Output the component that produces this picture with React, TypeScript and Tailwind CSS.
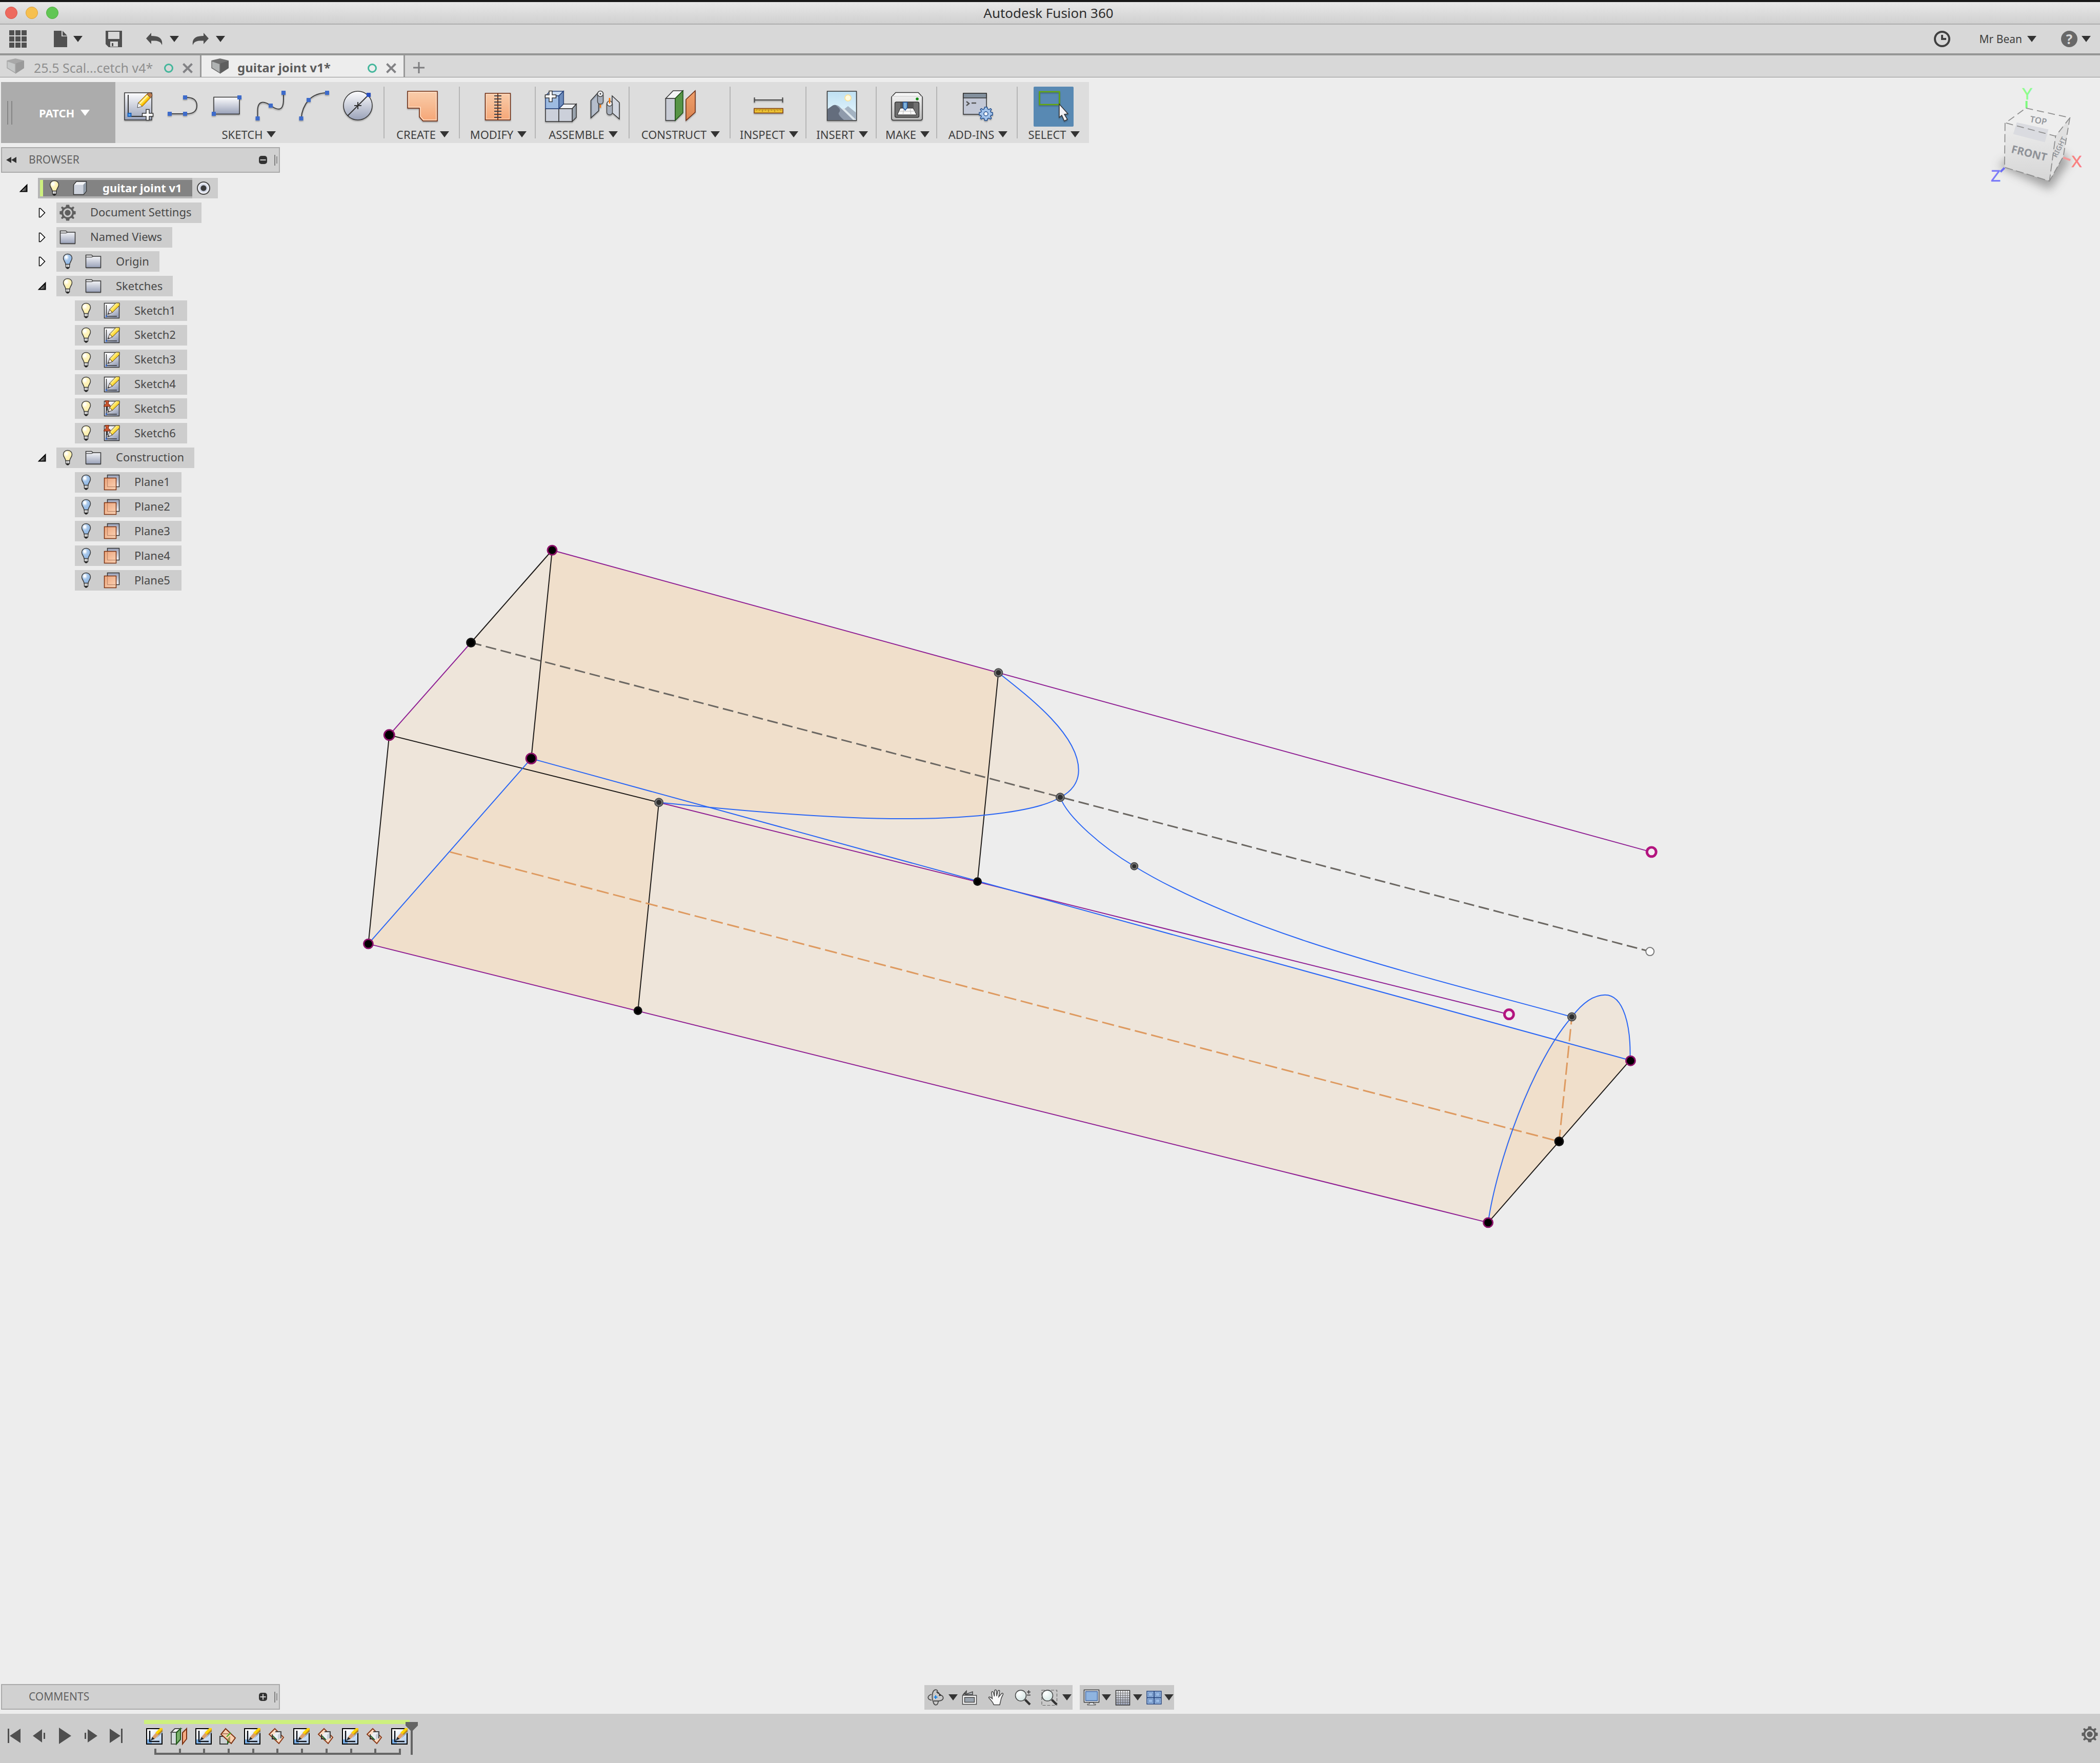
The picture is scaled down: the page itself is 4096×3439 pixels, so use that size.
import React from "react";

type Kids = { children?: React.ReactNode };

const Caret = ({ className = "text-[#333333]" }: { className?: string }) => (
  <svg viewBox="0 0 18 12" className={`h-3 w-[18px] shrink-0 ${className}`} aria-hidden="true">
    <path d="M0 0H18L9 12Z" fill="currentColor" />
  </svg>
);

const Defs = () => (
  <svg className="absolute size-0" aria-hidden="true">
    <defs>
      <linearGradient id="steel" x1="0" y1="0" x2="0" y2="1">
        <stop offset="0" stopColor="#fdfdfe" />
        <stop offset="1" stopColor="#99a1b8" />
      </linearGradient>
      <linearGradient id="paper" x1="0" y1="0" x2="0.6" y2="1">
        <stop offset="0.2" stopColor="#fdfdfe" />
        <stop offset="1" stopColor="#99a1b8" />
      </linearGradient>
      <linearGradient id="steelUp" x1="0" y1="1" x2="0" y2="0">
        <stop offset="0" stopColor="#f6f7fa" />
        <stop offset="1" stopColor="#99a1b8" />
      </linearGradient>
      <linearGradient id="peach" x1="0" y1="0" x2="0" y2="1">
        <stop offset="0" stopColor="#f9cdab" />
        <stop offset="1" stopColor="#f5a676" />
      </linearGradient>
      <linearGradient id="peachSoft" x1="0" y1="0" x2="1" y2="1">
        <stop offset="0" stopColor="#f3a172" />
        <stop offset="1" stopColor="#fad0b0" />
      </linearGradient>
      <linearGradient id="orange" x1="0" y1="0" x2="0" y2="1">
        <stop offset="0" stopColor="#f0a06b" />
        <stop offset="1" stopColor="#d98350" />
      </linearGradient>
      <linearGradient id="pencil" x1="0" y1="0" x2="1" y2="1">
        <stop offset="0.3" stopColor="#fff6b8" />
        <stop offset="0.5" stopColor="#ffe14a" />
        <stop offset="0.75" stopColor="#f7bd14" />
      </linearGradient>
      <linearGradient id="sky" x1="0" y1="0" x2="0" y2="1">
        <stop offset="0" stopColor="#bfe0f2" />
        <stop offset="1" stopColor="#eaf9ff" />
      </linearGradient>
      <linearGradient id="printer" x1="0" y1="0" x2="0" y2="1">
        <stop offset="0" stopColor="#fafafa" />
        <stop offset="1" stopColor="#b9b9b9" />
      </linearGradient>
      <linearGradient id="tlSketch" x1="0" y1="0" x2="1" y2="1">
        <stop offset="0.2" stopColor="#ffffff" />
        <stop offset="1" stopColor="#a9c6e8" />
      </linearGradient>
      <linearGradient id="blackTri" x1="0" y1="0" x2="1" y2="0">
        <stop offset="0" stopColor="#c0c0c0" />
        <stop offset="1" stopColor="#303030" />
      </linearGradient>
      <radialGradient id="bulbOn" cx="0.35" cy="0.3" r="0.7">
        <stop offset="0.1" stopColor="#ffffff" />
        <stop offset="0.45" stopColor="#fff3bd" />
        <stop offset="1" stopColor="#fff0a8" />
      </radialGradient>
      <radialGradient id="bulbOff" cx="0.35" cy="0.3" r="0.7">
        <stop offset="0.1" stopColor="#ffffff" />
        <stop offset="0.45" stopColor="#a5c6ea" />
        <stop offset="1" stopColor="#8fb6e4" />
      </radialGradient>
      <radialGradient id="lens" cx="0.35" cy="0.3" r="0.8">
        <stop offset="0" stopColor="#ffffff" />
        <stop offset="1" stopColor="#cfe2e0" />
      </radialGradient>
      <linearGradient id="cubeFront" x1="0" y1="0" x2="0" y2="1">
        <stop offset="0" stopColor="#ececec" />
        <stop offset="1" stopColor="#d6d6d6" />
      </linearGradient>
    </defs>
  </svg>
);

/* ---------- ribbon icons ---------- */

const Big = ({ children }: Kids) => (
  <svg viewBox="0 0 64 64" className="size-16 overflow-visible drop-shadow-[0_2px_1px_rgba(0,0,0,0.28)]" aria-hidden="true">
    {children}
  </svg>
);

const Handle = ({ x, y }: { x: number; y: number }) => (
  <rect x={x - 4} y={y - 4} width="8" height="8" fill="#3d6bcb" />
);

const Plus = ({ x, y }: { x: number; y: number }) => (
  <path
    transform={`translate(${x} ${y})`}
    d="M-3-10.500H3V-3H10.500V3H3V10.500H-3V3H-10.500V-3H-3Z"
    fill="#fff"
    stroke="#333"
    strokeWidth="1.500"
  />
);

const CreateSketchIcon = () => (
  <Big>
    <rect x="4" y="5" width="53" height="53" fill="url(#steel)" stroke="#333" strokeWidth="1.500" />
    <path d="M11 9V51H40" fill="none" stroke="#333" strokeWidth="2" />
    <rect x="10.500" y="45" width="6" height="6" fill="#4da0f5" stroke="#1d5fb5" strokeWidth="2" />
    <path d="M29 34L30.500 24.500L38.600 31.500Z" fill="#fff" stroke="#444" strokeWidth="1" />
    <path d="M31 24.500L47.400 7.700L54.600 14.700L38.600 31.500Z" fill="#f7b500" stroke="#8a5a00" strokeWidth="1" />
    <path d="M32 25.500L48.400 8.700L50.800 11L34.400 27.800Z" fill="#fff3a8" />
    <path d="M34.400 27.800L50.800 11L52.500 12.700L36.200 29.500Z" fill="#ffdd2e" />
    <path d="M47.400 7.700Q52 2.500 56.500 6.500Q60 10.500 54.600 14.700Z" fill="#b97a50" stroke="#5a3a20" strokeWidth="1" />
    <Plus x={49} y={48} />
  </Big>
);
const LineIcon = () => (
  <Big>
    <path d="M7 46H37Q60 47 60 30Q60 13 37 14" fill="none" stroke="#444" strokeWidth="2" />
    <Handle x={7} y={46} />
    <Handle x={37} y={46} />
    <Handle x={37} y={14} />
  </Big>
);
const RectIcon = () => (
  <Big>
    <rect x="7" y="13.500" width="50" height="33" fill="url(#steel)" stroke="#333" strokeWidth="1.500" />
    <Handle x={7} y={46} />
    <Handle x={57} y={14} />
  </Big>
);
const SplineIcon = () => (
  <Big>
    <path d="M7.500 55V40C7.500 18 22 22 33 30S58 44 58 18V5" fill="none" stroke="#444" strokeWidth="2" />
    <Handle x={7.5} y={55} />
    <Handle x={33} y={30} />
    <Handle x={58} y={5} />
  </Big>
);
const ArcIcon = () => (
  <Big>
    <path d="M7.500 55Q9 34 22 19Q36 5 58 5" fill="none" stroke="#444" strokeWidth="2" />
    <Handle x={7.5} y={55} />
    <Handle x={22} y={19} />
    <Handle x={58} y={5} />
  </Big>
);
const CircleIcon = () => (
  <Big>
    <circle cx="32" cy="30" r="28" fill="url(#steel)" stroke="#333" strokeWidth="1.500" />
    <path d="M12 50L53 9" stroke="#333" strokeWidth="2" />
    <path d="M25 30H39M32 23V37" stroke="#333" strokeWidth="2" />
    <rect x="49" y="5" width="8" height="8" fill="#2a4fc0" />
  </Big>
);
const PatchShapeIcon = () => (
  <Big>
    <path d="M3 2H61V60H33L26 52V35H3Z" fill="url(#peach)" stroke="#6b2a10" strokeWidth="1.500" />
    <path d="M5 33V4H59V58H34L28 51V33Z" fill="none" stroke="#fde0c8" strokeWidth="1.500" />
  </Big>
);
const StitchIcon = () => (
  <Big>
    <rect x="7.500" y="6" width="49" height="52" fill="url(#peach)" stroke="#6b2a10" strokeWidth="1.500" />
    <rect x="9.500" y="8" width="45" height="48" fill="none" stroke="#fde0c8" strokeWidth="1" />
    <path d="M32 6V58" stroke="#7a3010" strokeWidth="2" />
    {[11, 17, 23, 29, 35, 41, 47, 53].map((y) => (
      <path key={y} d={`M25 ${y}H39`} stroke="#3a3f4a" strokeWidth="2" />
    ))}
  </Big>
);
const NewComponentIcon = () => (
  <Big>
    <path d="M28 36L37 27H62L54 36Z" fill="#f2f3f5" stroke="#333" strokeWidth="1.500" />
    <path d="M54 36L62 27V53L54 61Z" fill="#9aa3ad" stroke="#333" strokeWidth="1.500" />
    <path d="M2 36H28V61H2Z" fill="#ccd0da" stroke="#333" strokeWidth="1.500" />
    <path d="M28 36H54V61H28Z" fill="#ccd0da" stroke="#333" strokeWidth="1.500" />
    <path d="M2 11L11 2H37L28 11Z" fill="#c9dbf1" stroke="#25407a" strokeWidth="1.500" />
    <path d="M28 11L37 2V27L28 36Z" fill="#6d8cbc" stroke="#25407a" strokeWidth="1.500" />
    <path d="M2 11H28V36H2Z" fill="#9dbbe2" stroke="#25407a" strokeWidth="1.500" />
    <Plus x={12} y={12} />
  </Big>
);
const JointIcon = () => (
  <Big>
    <path d="M4.500 20L20 3V40L4.500 54Z" fill="#99a4b3" stroke="#333" strokeWidth="1.500" />
    <path d="M7 21L18 10V40L7 50Z" fill="#b5bdca" />
    <rect x="17.500" y="5" width="11" height="22" rx="5" fill="#a8b0bd" stroke="#444" strokeWidth="1.500" />
    <circle cx="23" cy="7" r="5.500" fill="#eef0f3" stroke="#444" strokeWidth="1.500" />
    <circle cx="23" cy="7" r="1.500" fill="#333" />
    <path d="M23 28V34" stroke="#ff7700" strokeWidth="2.500" />
    <path d="M46 11L60 24V56L46 44Z" fill="#d3d7e0" stroke="#333" strokeWidth="1.500" />
    <rect x="35.500" y="22" width="11" height="26" rx="5" fill="#a8b0bd" stroke="#444" strokeWidth="1.500" />
    <circle cx="41" cy="26" r="5" fill="#eef0f3" stroke="#444" strokeWidth="1.500" />
    <path d="M41 15V26" stroke="#ff7700" strokeWidth="2.500" />
  </Big>
);
const OffsetPlaneIcon = () => (
  <Big>
    <path d="M3.500 16L18 1H37L22 16Z" fill="#f4f5f7" stroke="#333" strokeWidth="1.500" />
    <path d="M3.500 16H22V59H3.500Z" fill="#c9ccd6" stroke="#333" strokeWidth="1.500" />
    <path d="M22 16L37 1V44L22 59Z" fill="#579447" stroke="#1f5218" strokeWidth="1.500" />
    <path d="M43 18L61 1V43L43 59Z" fill="url(#orange)" stroke="#6b2a10" strokeWidth="1.500" />
  </Big>
);
const MeasureIcon = () => (
  <Big>
    <path d="M4 19H60M4.500 14V24M59.500 14V24" stroke="#444" strokeWidth="2" />
    <rect x="4" y="35.500" width="56" height="9" fill="#ecc133" stroke="#7a3a10" strokeWidth="1.500" />
    <path d="M8 37V40M11 37V39M14 37V40M17 37V39M20 37V42M23 37V39M26 37V40M29 37V39M32 37V42M35 37V39M38 37V40M41 37V39M44 37V42M47 37V39M50 37V40M53 37V39M56 37V40" stroke="#8a5a10" strokeWidth="1" />
  </Big>
);
const PictureIcon = () => (
  <Big>
    <rect x="3.500" y="2" width="57" height="57" fill="url(#sky)" stroke="#333" strokeWidth="1.500" />
    <circle cx="44" cy="15" r="6" fill="#fffbe0" stroke="#ffe08a" strokeWidth="1.500" />
    <path d="M30 42L44 31L60 44V58H40Z" fill="#a4b3c2" />
    <path d="M36 35L60 58H44L30 36Z" fill="#dde6ec" />
    <path d="M4 37L14 30Q20 27 26 31L54 58H4Z" fill="#8f9aab" />
    <path d="M4 37L14 30Q20 27 22 31Q32 38 26 44Q24 48 36 58H4Z" fill="#646d7d" />
  </Big>
);
const PrinterIcon = () => (
  <Big>
    <path d="M10 4.500H54L62 13V55Q62 58.500 58 58.500H6Q2 58.500 2 55V13Z" fill="url(#printer)" stroke="#333" strokeWidth="1.500" />
    <path d="M3.500 12H60.500" stroke="#dcdcdc" strokeWidth="2" />
    <rect x="8.500" y="23" width="47" height="30" rx="3" fill="#6f6f6f" stroke="#333" strokeWidth="1.500" />
    <path d="M19 24H45V35H19Z" fill="#555" />
    <path d="M19 35H44L51 48H13Z" fill="#fafafa" stroke="#222" strokeWidth="1" />
    <path d="M26 35L24 48M38 35L40 48M17 41H48" stroke="#bbb" strokeWidth="1" />
    <path d="M24.500 23.500H32.500V34L28.500 39L24.500 34Z" fill="#7fb2d9" stroke="#1d4f9a" strokeWidth="1.500" />
    <circle cx="52" cy="17" r="2.800" fill="#118a11" />
  </Big>
);
const gearPath =
  "M-2.500-13H2.500L3.200-9.500L6-8.400L9-10.300L10.900-8.400L8.800-5.600L9.800-3L13-2.500V2.500L9.800 3L8.800 5.600L10.900 8.400L9 10.300L6 8.400L3.200 9.500L2.500 13H-2.500L-3.200 9.500L-6 8.400L-9 10.300L-10.900 8.400L-8.800 5.600L-9.800 3L-13 2.500V-2.500L-9.800-3L-8.800-5.600L-10.900-8.400L-9-10.300L-6-8.400L-3.200-9.500Z";
const AddInsIcon = () => (
  <Big>
    <rect x="4" y="6" width="45" height="41" fill="#c3c8d6" stroke="#333" strokeWidth="1.500" />
    <rect x="4" y="6" width="45" height="9" fill="#84919e" stroke="#333" strokeWidth="1.500" />
    <path d="M10 22L15 26L10 30M20 25H29" fill="none" stroke="#555" strokeWidth="2.500" />
    <path transform="translate(48 46)" d={gearPath} fill="#a3c3ea" stroke="#25508f" strokeWidth="1.500" />
    <circle cx="48" cy="46" r="4" fill="#fff" stroke="#25508f" strokeWidth="1.500" />
  </Big>
);
const SelectIcon = () => (
  <svg viewBox="0 0 78 78" className="size-[78px] drop-shadow-[0_2px_1px_rgba(0,0,0,0.28)]" aria-hidden="true">
    <rect x="11.500" y="10" width="39" height="25" fill="none" stroke="#64a70b" strokeWidth="2.500" />
    <path d="M50 34L67 53L60 54L66 64L60 67L55 56L50 60Z" fill="#f1f1f5" stroke="#333" strokeWidth="1.500" />
  </svg>
);

/* ---------- browser icons ---------- */

const Small = ({ children }: Kids) => (
  <svg viewBox="0 0 32 32" className="size-8 shrink-0 overflow-visible" aria-hidden="true">
    {children}
  </svg>
);

const Bulb = ({ on }: { on: boolean }) => (
  <Small>
    <path
      d="M16 1.500C10.500 1.500 7.500 5.500 7.500 9.500C7.500 14.500 12 17 12 22H20C20 17 24.500 14.500 24.500 9.500C24.500 5.500 21.500 1.500 16 1.500Z"
      fill={on ? "url(#bulbOn)" : "url(#bulbOff)"}
      stroke="#3a3a3a"
      strokeWidth="1.500"
    />
    <rect x="12.500" y="21.500" width="7" height="6" fill="#f2f2f2" stroke="#3a3a3a" strokeWidth="1.500" />
    <path d="M16 22V27" stroke="#777" />
    <path d="M12 27.500H20L17.500 30.500H14.500Z" fill="#222" />
  </Small>
);
const Folder = () => (
  <Small>
    <path d="M1.500 28V3.500H12.500L15.500 6H30.500V28Z" fill="url(#steel)" stroke="#333" strokeWidth="1.500" />
    <path d="M2 7.500H12.500L16 6" fill="none" stroke="#555" strokeWidth="1.500" />
    <path d="M2 29.500H31" stroke="#9a9a9a" strokeWidth="1" />
  </Small>
);
const SketchDoc = ({ pinned }: { pinned?: boolean }) => (
  <Small>
    <rect x="1.500" y="1.500" width="29" height="29" fill="url(#paper)" stroke="#333" strokeWidth="1.500" />
    <path d="M5.500 5V26M7 27H26" stroke="#333" strokeWidth="1.500" />
    <rect x="4" y="25.500" width="3" height="3" fill="#2f66d0" />
    <path d="M8 23.500L12 13.500L17 19.500Z" fill="#f9e9da" stroke="#333" strokeWidth="1" />
    <path d="M8 23.500L9.500 19.500L12 22Z" fill="#444" />
    <path d="M12 13.500L24 1H31V6L17 19.500Z" fill="url(#pencil)" stroke="#4a3a10" strokeWidth="1" />
    {pinned && (
      <g>
        <path d="M7 11V20" stroke="#333" strokeWidth="2.500" />
        <path d="M3.500 0.500H10.500V3H9.500V7Q13.500 8.500 13.500 12H0.500Q0.500 8.500 4.500 7V3H3.500Z" fill="#c9562f" stroke="#6b200c" strokeWidth="1" />
      </g>
    )}
  </Small>
);
const PlaneIcon = () => (
  <Small>
    <rect x="7.500" y="1.500" width="23" height="23" fill="url(#steelUp)" stroke="#333" strokeWidth="1.500" />
    <rect x="1.500" y="7.500" width="23" height="23" fill="url(#peachSoft)" fillOpacity="0.9" stroke="#7a3010" strokeWidth="1.500" />
    <path d="M7.500 9V24.500H23" fill="none" stroke="#b98468" strokeWidth="1" />
  </Small>
);
const Cog = () => (
  <Small>
    <g transform="translate(16 16) scale(1.200)">
      <path d={gearPath} fill="#5f5f5f" />
      <circle r="6" fill="none" stroke="#cdcdcd" strokeWidth="2.500" />
    </g>
  </Small>
);
const BodyCube = () => (
  <Small>
    <path d="M3.500 10L9 3H28.500V22L23 28.500H3.500Z" fill="#cdd2dc" stroke="#333" strokeWidth="1.500" />
    <path d="M4.500 9.500L9.500 4H27.500L22.500 9.500Z" fill="#f4f5f7" />
    <path d="M22.500 9.500L27.800 4V22L22.500 27.800Z" fill="#8f9aa6" />
  </Small>
);

const Twisty = ({ open }: { open: boolean }) => (
  <svg viewBox="0 0 28 28" className="size-7" aria-hidden="true">
    {open ? (
      <path d="M8 20.500L20.500 8V20.500Z" fill="url(#blackTri)" stroke="#000" strokeWidth="2" />
    ) : (
      <path d="M8.500 5.500H11L19.500 14L11 22.500H8.500Z" fill="#f8f8f8" stroke="#000" strokeWidth="1.500" />
    )}
  </svg>
);

/* ---------- title, quick access, tabs ---------- */

const TitleBar = () => (
  <header className="flex h-[48px] shrink-0 items-center border-t-4 border-b-2 border-t-[#181818] border-b-[#aeaeae] bg-gradient-to-b from-[#e8e8e8] to-[#d0d0d0]">
    <div className="flex flex-1 gap-4 pl-[10px]">
      <button aria-label="Close window" className="size-6 rounded-full border border-[#d8554b] bg-[#ee6a5e]" />
      <button aria-label="Minimise window" className="size-6 rounded-full border border-[#dca03c] bg-[#f6c04f]" />
      <button aria-label="Zoom window" className="size-6 rounded-full border border-[#4fae3f] bg-[#61c654]" />
    </div>
    <h1 className="text-[26px] leading-8 text-[#2d2d2d]">Autodesk Fusion 360</h1>
    <div className="flex-1 pr-4" />
  </header>
);

const QuickBar = () => (
  <div className="flex h-[60px] shrink-0 items-center justify-between border-b-4 border-[#959695] bg-[#d8d8d8]">
    <div className="flex items-center pl-[18px] text-[#505050]">
      <button aria-label="Data panel">
        <svg viewBox="0 0 34 34" className="size-[34px]">
          {[0, 12, 24].map((y) => [0, 12, 24].map((x) => <rect key={`${x}-${y}`} x={x} y={y} width="10" height="10" fill="currentColor" />))}
        </svg>
      </button>
      <button aria-label="File" className="ml-[53px] flex items-center gap-3">
        <svg viewBox="0 0 26 32" className="h-8 w-[26px]">
          <path d="M0 0H15V11H26V32H0ZM17 0L26 9.500H17Z" fill="currentColor" />
        </svg>
        <Caret />
      </button>
      <button aria-label="Save" className="ml-[45px]">
        <svg viewBox="0 0 32 32" className="size-8">
          <path fillRule="evenodd" d="M0 0H32V32H6L0 26ZM5 2H27V16H5ZM9 21V31H24V21Z" fill="currentColor" />
          <rect x="12" y="24" width="3" height="6" fill="currentColor" />
        </svg>
      </button>
      <button aria-label="Undo" className="ml-[47px] flex items-center gap-[14px]">
        <svg viewBox="0 0 32 24" className="h-6 w-8">
          <path d="M0 11L10 0V6C24 6 33 10 31 24C28 16 22 15 10 15.500V22Z" fill="currentColor" />
        </svg>
        <Caret />
      </button>
      <button aria-label="Redo" className="ml-[26px] flex items-center gap-[14px]">
        <svg viewBox="0 0 32 24" className="h-6 w-8">
          <path d="M32 11L22 0V6C8 6-1 10 1 24C4 16 10 15 22 15.500V22Z" fill="currentColor" />
        </svg>
        <Caret />
      </button>
    </div>
    <div className="flex items-center pr-[18px] text-[#404040]">
      <button aria-label="Job status">
        <svg viewBox="0 0 32 32" className="size-8">
          <circle cx="16" cy="16" r="14" fill="none" stroke="currentColor" strokeWidth="4" />
          <path d="M14 8H18V14H24V18H14Z" fill="currentColor" />
        </svg>
      </button>
      <button className="ml-[57px] flex items-center gap-[10px] text-[21px] leading-7">
        Mr Bean
        <Caret />
      </button>
      <button aria-label="Help" className="ml-[48px] flex items-center gap-2">
        <span className="flex size-8 items-center justify-center rounded-full bg-[#686868] text-[26px] leading-8 font-bold text-[#d8d8d8]">?</span>
        <Caret />
      </button>
    </div>
  </div>
);

const TabCube = ({ dim }: { dim?: boolean }) => (
  <svg viewBox="0 0 34 30" className="h-[30px] w-[34px] shrink-0" aria-hidden="true">
    <path d="M0 4L17 0L34 4L17 11Z" fill={dim ? "#a8a8a8" : "#6f6f6f"} />
    <path d="M17 10L34 4V19L17 30Z" fill={dim ? "#9a9a9a" : "#5f5f5f"} />
    <path d="M1 5L17 10.500V28.500L1 18.500Z" fill={dim ? "#c6c8c8" : "#b0b3b3"} stroke={dim ? "#a8a8a8" : "#6f6f6f"} strokeWidth="1.500" />
  </svg>
);

const Ring = () => <span className="size-[18px] shrink-0 rounded-full border-[3px] border-[#43b69b]" />;

const Cross = () => (
  <svg viewBox="0 0 20 20" className="size-5 shrink-0 text-[#828285]" aria-hidden="true">
    <path d="M1.500 1.500L18.500 18.500M18.500 1.500L1.500 18.500" stroke="currentColor" strokeWidth="4" />
  </svg>
);

const Tabs = () => (
  <nav aria-label="Documents" className="flex h-[43px] shrink-0 border-b border-[#8e8e8e] bg-[#d8d8d8]">
    <div className="flex w-[393px] items-center border-r-[3px] border-[#999999] pr-[14px] pl-[13px]">
      <TabCube dim />
      <button className="ml-[19px] pt-[6px] text-[25px] leading-8 whitespace-nowrap text-[#8f8f8f]">25.5 Scal...cetch v4*</button>
      <span className="mt-[8px] ml-auto flex items-center gap-[18px]">
        <Ring />
        <button aria-label="Close 25.5 Scal...cetch v4">
          <Cross />
        </button>
      </span>
    </div>
    <div className="flex w-[397px] items-center border-r-[3px] border-[#999999] bg-[#ededed] pr-[14px] pl-[19px]">
      <TabCube />
      <button className="ml-[17px] pt-[6px] text-[24px] leading-8 font-bold whitespace-nowrap text-[#5c5c5c]">guitar joint v1*</button>
      <span className="mt-[8px] ml-auto flex items-center gap-[18px]">
        <Ring />
        <button aria-label="Close guitar joint v1">
          <Cross />
        </button>
      </span>
    </div>
    <button aria-label="New tab" className="flex w-[53px] items-center justify-center pt-[6px]">
      <svg viewBox="0 0 22 22" className="size-[22px] text-[#7c7c7f]">
        <path d="M11 0V22M0 11H22" stroke="currentColor" strokeWidth="3" />
      </svg>
    </button>
  </nav>
);

/* ---------- ribbon ---------- */

type Group = { label: string; width: string; icons: { name: string; node: React.ReactNode }[] };

const groups: Group[] = [
  { label: "CREATE", width: "w-[147px]", icons: [{ name: "Patch", node: <PatchShapeIcon /> }] },
  { label: "MODIFY", width: "w-[148px]", icons: [{ name: "Stitch", node: <StitchIcon /> }] },
  {
    label: "ASSEMBLE",
    width: "w-[183px]",
    icons: [
      { name: "New component", node: <NewComponentIcon /> },
      { name: "Joint", node: <JointIcon /> },
    ],
  },
  { label: "CONSTRUCT", width: "w-[197px]", icons: [{ name: "Offset plane", node: <OffsetPlaneIcon /> }] },
  { label: "INSPECT", width: "w-[148px]", icons: [{ name: "Measure", node: <MeasureIcon /> }] },
  { label: "INSERT", width: "w-[137px]", icons: [{ name: "Attached canvas", node: <PictureIcon /> }] },
  { label: "MAKE", width: "w-[118px]", icons: [{ name: "3D print", node: <PrinterIcon /> }] },
  { label: "ADD-INS", width: "w-[157px]", icons: [{ name: "Scripts and add-ins", node: <AddInsIcon /> }] },
];

const GroupLabel = ({ children }: Kids) => (
  <button className="mt-px flex items-center gap-2 pl-[2px] text-[22px] leading-7 text-[#404040]">
    {children}
    <Caret />
  </button>
);

const Separator = () => <span className="mt-[9px] h-[101px] w-[2px] shrink-0 bg-[#b5b5b5]" />;

const Ribbon = () => (
  <div className="mt-[9px] ml-[2px] flex h-[119px] w-fit bg-[#dddddd]">
    <button className="flex w-[223px] items-center bg-[#acacac] pl-3 text-[22px] leading-7 font-bold text-white">
      <span className="h-[46px] w-[10px] border-x-2 border-[#858585]" />
      <span className="ml-[52px] flex items-center gap-3">
        PATCH
        <Caret className="text-white" />
      </span>
    </button>
    <div className="flex">
      <div className="flex w-[523px] flex-col items-center pt-[9px] pr-1">
        <div className="grid h-[78px] w-[512px] grid-cols-6 place-items-center">
          <button aria-label="Create sketch"><CreateSketchIcon /></button>
          <button aria-label="Line"><LineIcon /></button>
          <button aria-label="Rectangle"><RectIcon /></button>
          <button aria-label="Spline"><SplineIcon /></button>
          <button aria-label="Arc"><ArcIcon /></button>
          <button aria-label="Circle"><CircleIcon /></button>
        </div>
        <GroupLabel>SKETCH</GroupLabel>
      </div>
      <Separator />
    </div>
    {groups.map((g) => (
      <div key={g.label} className={`flex ${g.width}`}>
        <div className="flex flex-1 flex-col items-center pt-[9px] pl-[2px]">
          <div className="flex h-[78px] items-center gap-[22px]">
            {g.icons.map((i) => (
              <button key={i.name} aria-label={i.name}>
                {i.node}
              </button>
            ))}
          </div>
          <GroupLabel>{g.label}</GroupLabel>
        </div>
        <Separator />
      </div>
    ))}
    <div className="flex w-[139px] flex-col items-center pt-[9px]">
      <button aria-label="Select" className="rounded-[2px] bg-[#5889b3]">
        <SelectIcon />
      </button>
      <GroupLabel>SELECT</GroupLabel>
    </div>
  </div>
);

/* ---------- browser ---------- */

const PanelHeader = ({ title, collapsed }: { title: string; collapsed?: boolean }) => (
  <div className="ml-[2px] flex h-[50px] w-[544px] items-center border-2 border-[#aaaaaa] bg-[#d1d1d1] pr-[3px] pl-2 text-[21px] leading-7 text-[#636363]">
    <span className="flex w-5">
      {!collapsed && (
        <svg viewBox="0 0 20 12" className="h-3 w-5 text-[#333333]" aria-hidden="true">
          <path d="M0 6L10 0V12ZM10 6L20 0V12Z" fill="currentColor" />
        </svg>
      )}
    </span>
    <h2 className="ml-6 pb-[2px]">{title}</h2>
    <button aria-label={collapsed ? "Expand panel" : "Collapse panel"} className="ml-auto">
      <svg viewBox="0 0 16 16" className="size-4">
        <rect width="16" height="16" rx="5" fill="#333" />
        <path d={collapsed ? "M2.500 8H13.500M8 2.500V13.500" : "M2.500 8H13.500"} stroke="#d1d1d1" strokeWidth="2" />
      </svg>
    </button>
    <span className="ml-[14px] flex items-center gap-[2px]">
      <span className="h-[21px] w-[2px] bg-[#808080]" />
      <span className="h-[14px] w-[2px] bg-[#909090]" />
    </span>
  </div>
);

type Node = {
  label: string;
  depth: 1 | 2;
  open?: boolean;
  icons: React.ReactNode[];
};

const nodes: Node[] = [
  { label: "Document Settings", depth: 1, open: false, icons: [<Cog key="c" />] },
  { label: "Named Views", depth: 1, open: false, icons: [<Folder key="f" />] },
  { label: "Origin", depth: 1, open: false, icons: [<Bulb key="b" on={false} />, <Folder key="f" />] },
  { label: "Sketches", depth: 1, open: true, icons: [<Bulb key="b" on />, <Folder key="f" />] },
  ...[1, 2, 3, 4, 5, 6].map(
    (n): Node => ({ label: `Sketch${n}`, depth: 2, icons: [<Bulb key="b" on />, <SketchDoc key="s" pinned={n > 4} />] })
  ),
  { label: "Construction", depth: 1, open: true, icons: [<Bulb key="b" on />, <Folder key="f" />] },
  ...[1, 2, 3, 4, 5].map((n): Node => ({ label: `Plane${n}`, depth: 2, icons: [<Bulb key="b" on={false} />, <PlaneIcon key="p" />] })),
];

const Tree = () => (
  <ul className="mt-[10px] flex h-[805px] flex-col justify-between text-[22px] leading-7 text-[#484848]">
    <li className="flex h-10 items-center gap-[14px] pl-8">
      <button aria-label="Toggle guitar joint v1">
        <Twisty open />
      </button>
      <div className="flex h-10 items-center bg-[#cdcdcd]">
        <button className="flex h-10 items-center border-y-4 border-l-4 border-[#b5b5b5] bg-[#838383] pr-5 font-bold text-white">
          <span className="mr-[6px] h-8 w-[6px] bg-[#cdf07f]" />
          <Bulb on />
          <span className="ml-[18px] flex"><BodyCube /></span>
          <span className="ml-7 pb-[3px]">guitar joint v1</span>
        </button>
        <label className="flex h-10 w-[50px] items-center justify-center pr-[6px]">
          <input
            type="radio"
            defaultChecked
            aria-label="Activate guitar joint v1"
            className="size-[26px] appearance-none rounded-full border-2 border-[#444444] bg-[radial-gradient(circle,#3a3a3a_0_5px,#c4cada_6px,#e8eaf2_9px,#ffffff_12px)]"
          />
        </label>
      </div>
    </li>
    {nodes.map((n) => (
      <li key={n.label} className={`flex h-10 items-center ${n.depth === 1 ? "gap-[14px] pl-[68px]" : "pl-[146px]"}`}>
        {n.depth === 1 && (
          <button aria-label={`Toggle ${n.label}`}>
            <Twisty open={!!n.open} />
          </button>
        )}
        <button className={`flex h-10 items-center bg-[#cdcdcd] pl-[6px] ${n.depth === 1 ? "pr-5" : "pr-[22px]"}`}>
          <span className="flex gap-[18px]">{n.icons}</span>
          <span className="ml-7 pb-[3px]">{n.label}</span>
        </button>
      </li>
    ))}
  </ul>
);

/* ---------- view cube ---------- */

const ViewCube = () => (
  <svg viewBox="3880 160 232 240" className="h-[239px] w-[231px] shrink-0" role="img" aria-label="View cube">
    <defs>
      <filter id="soft" x="-30%" y="-30%" width="160%" height="160%">
        <feGaussianBlur stdDeviation="9" />
      </filter>
    </defs>
    <path d="M3912 325L4014 372L4054 314L4000 270Z" fill="#8a8a8a" opacity="0.75" filter="url(#soft)" />
    <path d="M3968 212V198" stroke="#7dfb7d" strokeWidth="4" />
    <g fontSize="31" fontFamily="Liberation Sans" strokeWidth="0.600">
      <text x="3959" y="195" fill="#8dfd8d" stroke="#8dfd8d">Y</text>
      <text x="4056" y="328" fill="#fa8080" stroke="#fa8080">X</text>
      <text x="3898" y="356" fill="#7a7af8" stroke="#7a7af8">Z</text>
    </g>
    <path d="M4040 309L4054 314" stroke="#f59a9a" strokeWidth="4" />
    <path d="M3925 329L3917 337" stroke="#6c6cf5" strokeWidth="4" />
    <path d="M3967 212L4053 231L4025 267L3927 241Z" fill="#eeeeee" />
    <path d="M3927 241L4025 267L4013 355L3925 328Z" fill="url(#cubeFront)" />
    <path d="M4025 267L4053 231L4040 307L4013 355Z" fill="#e0e0e0" />
    <path d="M3949 240L4011 254L4004 279L3942 263Z" fill="#dadbe0" />
    <g fill="none" stroke="#8e8e8e" strokeWidth="1.800">
      <path d="M3967 212L4053 231L4025 267L3927 241Z" strokeDasharray="14 8" />
      <path d="M3926 241L3925 328L4013 355L4025 267" strokeDasharray="16 6" />
      <path d="M4053 231L4040 307L4013 355" strokeDasharray="14 6" />
    </g>
    <text transform="translate(3937 299) rotate(14)" fontSize="21" fontWeight="700" fill="#8f9298">FRONT</text>
    <text transform="translate(3974 239) rotate(11)" fontSize="17" fontWeight="600" fill="#94979c">TOP</text>
    <text transform="translate(4027 310) rotate(-63)" fontSize="14" fontWeight="600" fill="#94979c">RIGHT</text>
  </svg>
);

/* ---------- model ---------- */

const Dot = ({ x, y, r = 9, ring = "#8a1068" }: { x: number; y: number; r?: number; ring?: string }) => (
  <circle cx={x} cy={y} r={r} fill="#000" stroke={ring} strokeWidth="3" />
);
const GrayDot = ({ x, y, r = 8 }: { x: number; y: number; r?: number }) => (
  <g>
    <circle cx={x} cy={y} r={r} fill="#7a7a7a" stroke="#4a4a4a" strokeWidth="2" />
    <circle cx={x} cy={y} r={r - 3} fill="#2e2e2e" />
  </g>
);

const Model = () => (
  <svg viewBox="0 151 4112 3205" preserveAspectRatio="xMidYMin meet" className="absolute inset-0 size-full" role="img" aria-label="Guitar joint sketch">
    <g fill="#eee5da">
      <path d="M1081 1077L1955 1317L1914 1726L3192 2076L2914 2394L721 1848L762 1439Z" />
      <path d="M1955 1317C2020 1368 2112 1440 2112 1508C2112 1532 2098 1550 2076 1561C2030 1590 1900 1603 1770 1603Z" />
      <path d="M2914 2394C2930 2280 3000 2080 3078 1991C3100 1962 3122 1948 3143 1948C3180 1948 3194 2010 3192 2076Z" />
    </g>
    <g fill="#f0dfcb">
      <path d="M1081 1077L1955 1317L1927 1596Q1850 1603 1770 1603C1620 1603 1440 1586 1290 1571L1249 1979L721 1848L1040 1485Z" />
      <path d="M2914 2394C2926 2290 2980 2130 3043 2035L3192 2076Z" />
    </g>
    <g fill="none" strokeWidth="2">
      <g stroke="#1d1a18">
        <path d="M1081 1077L922 1258M1081 1077L1040 1485M762 1439L1290 1571M762 1439L721 1848M1290 1571L1249 1979M1955 1317L1914 1726M3192 2076L2914 2394" />
      </g>
      <path d="M922 1258L3231 1863" stroke="#6b6762" strokeWidth="3" strokeDasharray="21 9" />
      <path d="M881 1668L3053 2235L3078 1991" stroke="#de9a60" strokeWidth="3" strokeDasharray="24 9" />
      <g stroke="#8f1f93">
        <path d="M1081 1077L3226 1666M922 1258L762 1439M1290 1571L2946 1984M721 1848L2914 2394" />
      </g>
      <g stroke="#2a66f5">
        <path d="M1040 1485L3192 2076M1040 1485L721 1848" />
        <path d="M1955 1317C2020 1368 2112 1440 2112 1508C2112 1532 2098 1550 2076 1561C2030 1590 1900 1603 1770 1603C1620 1603 1440 1586 1290 1571" />
        <path d="M2076 1561C2090 1600 2160 1660 2221 1696C2440 1830 2790 1912 3078 1991" />
        <path d="M2914 2394C2930 2280 3000 2080 3078 1991C3100 1962 3122 1948 3143 1948C3180 1948 3194 2010 3192 2076" />
      </g>
    </g>
    <Dot x={1081} y={1077} />
    <Dot x={762} y={1439} r={10} />
    <Dot x={1040} y={1485} r={10} />
    <Dot x={721} y={1848} />
    <Dot x={3193} y={2077} />
    <Dot x={2914} y={2394} />
    <Dot x={922} y={1258} r={8} ring="#111111" />
    <Dot x={1249} y={1979} r={7} ring="#111111" />
    <Dot x={1914} y={1726} r={7} ring="#111111" />
    <Dot x={3053} y={2235} r={8} ring="#111111" />
    <GrayDot x={1955} y={1317} />
    <GrayDot x={1290} y={1571} />
    <GrayDot x={2076} y={1561} />
    <GrayDot x={2221} y={1696} r={7} />
    <GrayDot x={3078} y={1991} />
    <circle cx="3234" cy="1668" r="9" fill="#f3ecf1" stroke="#b3147f" strokeWidth="5" />
    <circle cx="2955" cy="1986" r="9" fill="#f3ecf1" stroke="#b3147f" strokeWidth="5" />
    <circle cx="3231" cy="1863" r="8" fill="#fafafa" stroke="#777" strokeWidth="2" />
  </svg>
);

/* ---------- navigation bar ---------- */

const OrbitIcon = () => (
  <Small>
    <g fill="none" stroke="#4a4a4a" strokeWidth="1.800">
      <path d="M10 8C12-1 19 0 20 5M10 8C9 14 9 20 11 24C13 33 20 33 21 24M8 10C-1 13-1 20 8 21.500M12 23H22C33 22 33 14 25 11" />
    </g>
    <path d="M17 5L23 7L21 9ZM23 8L27 12L23 13Z" fill="#333" stroke="#333" />
    <path d="M16 12V19M12.500 15.500H19.500" stroke="#0f7fe8" strokeWidth="2" />
  </Small>
);
const LookAtIcon = () => (
  <Small>
    <rect x="2.500" y="12" width="27" height="17.500" fill="#fafafa" stroke="#444" strokeWidth="1.500" />
    <rect x="6.500" y="16" width="19" height="9.500" fill="#9aa3ad" stroke="#444" strokeWidth="1.500" />
    <path d="M3 11L10 3.500V7ZM7 10.500L22 5V10.500Z" fill="#b5b9bf" stroke="#444" strokeWidth="1.500" />
  </Small>
);
const HandIcon = () => (
  <Small>
    <path
      d="M11 30C10 25 4 20 1.500 16.500C1.500 14.500 4 14.500 8.500 18.500L7 6.500C7 4 9.800 4 10.500 6.500L12.500 14L13 3C13.500 0.500 16 0.500 16.500 3L17 13.500L19.500 3.500C20.500 1.500 23 2 22.700 4.500L21 15L26.500 8.500C28.500 7 30.500 8.500 29 11C26 16 25 20 24.500 24L23 30.500H12Z"
      fill="#fbfbfb"
      stroke="#444"
      strokeWidth="1.500"
    />
  </Small>
);
const ZoomIcon = ({ fit }: { fit?: boolean }) => (
  <Small>
    {fit && <rect x="1" y="2" width="29.500" height="29.500" fill="none" stroke="#666" strokeWidth="1.200" strokeDasharray="6 3" />}
    <path d="M20.500 20.500L30 30" stroke="#333" strokeWidth="4.500" />
    <circle cx="12" cy="12.500" r="10.500" fill="url(#lens)" stroke="#444" strokeWidth="1.500" />
    {!fit && <path d="M24 5.500H31M27.500 2V9M24 11.500H31" stroke="#333" strokeWidth="1.500" />}
  </Small>
);
const DisplayIcon = () => (
  <Small>
    <path d="M12 26H20V29H24V31H8V29H12Z" fill="#dfe2e6" stroke="#444" strokeWidth="1" />
    <rect x="1.500" y="1.500" width="29" height="24" fill="#fbfbfb" stroke="#333" strokeWidth="1.500" />
    <rect x="4.500" y="4.500" width="23" height="18" fill="#8fb4e0" stroke="#3b5f9a" strokeWidth="1.500" />
  </Small>
);
const GridIcon = () => (
  <Small>
    <rect x="2.500" y="2.500" width="27" height="28.500" fill="url(#steel)" stroke="#333" strokeWidth="1.500" />
    <path d="M7 3V31M11.500 3V31M16 3V31M20.500 3V31M25 3V31M3 7.500H29M3 12H29M3 16.500H29M3 21H29M3 25.500H29" stroke="#666" strokeWidth="1" />
  </Small>
);
const ViewportsIcon = () => (
  <Small>
    <rect x="2" y="4" width="28" height="25" fill="#9dbde6" stroke="#27467f" strokeWidth="1.500" />
    <path d="M16 4V29M2 16.500H30" stroke="#27467f" strokeWidth="2" />
    <path d="M5 7H13V13.500H5ZM19 7H27V13.500H19ZM5 19.500H13V26H5ZM19 19.500H27V26H19Z" fill="none" stroke="#5f83b8" strokeWidth="1.200" />
  </Small>
);

const NavBar = () => (
  <div className="flex gap-[14px] pr-1">
    <div className="flex h-12 items-center bg-[#c9c9c9] pr-[2px] pl-[6px]">
      <button aria-label="Orbit" className="flex items-center gap-[9px]"><OrbitIcon /><Caret /></button>
      <button aria-label="Look at" className="ml-[7px]"><LookAtIcon /></button>
      <button aria-label="Pan" className="ml-5"><HandIcon /></button>
      <button aria-label="Zoom" className="ml-5"><ZoomIcon /></button>
      <button aria-label="Fit" className="ml-5 flex items-center gap-[9px]"><ZoomIcon fit /><Caret /></button>
    </div>
    <div className="flex h-12 items-center gap-[7px] bg-[#c9c9c9] pr-px pl-[7px]">
      <button aria-label="Display settings" className="flex items-center gap-1"><DisplayIcon /><Caret /></button>
      <button aria-label="Grid settings" className="flex items-center gap-1"><GridIcon /><Caret /></button>
      <button aria-label="Viewports" className="flex items-center gap-1"><ViewportsIcon /><Caret /></button>
    </div>
  </div>
);

/* ---------- timeline ---------- */

const TlSketch = () => (
  <Small>
    <rect x="1" y="1" width="30" height="30" fill="url(#tlSketch)" stroke="#000" strokeWidth="2" />
    <path d="M2 22H11V30H2Z" fill="#7db4ee" />
    <path d="M7 5V26H26" fill="none" stroke="#0c1018" strokeWidth="2.500" />
    <path d="M9 24L12 17L17 21Z" fill="#2a2a2a" />
    <path d="M12 17L19 9L25 13L17 21Z" fill="#dda06a" />
    <path d="M19 21L32 9V6L25 13Z" fill="#8fa6c8" />
    <path d="M18 9L27 0H32V5L24 13Z" fill="#ffd400" />
    <path d="M22 12L32 2V6L25 13Z" fill="#b98a20" />
  </Small>
);
const TlOffset = () => (
  <Small>
    <path d="M1 8L8 1H20L11 8Z" fill="#fafafa" stroke="#444" strokeWidth="2" />
    <path d="M1 8H11V31H1Z" fill="#d3dadb" stroke="#555" strokeWidth="2" />
    <path d="M11 9L19 1V22L11 31Z" fill="#79b06a" stroke="#235a1c" strokeWidth="2" />
    <path d="M23 9L31 1V21L23 31Z" fill="#f5ab82" stroke="#7a3010" strokeWidth="2" />
  </Small>
);
const TlAngle = () => (
  <Small>
    <path d="M1 16H16V31H1Z" fill="#cdd2d4" stroke="#3a3a3a" strokeWidth="2" />
    <path d="M15 22L19 18V28L15 31Z" fill="#1f6a1c" />
    <path d="M12 1L31 19L23 30L3 12Z" fill="#fbcfae" stroke="#7a3010" strokeWidth="2" />
    <path d="M15 22L21 15V25L19 26Z" fill="#a09a5a" />
    <path d="M6 11H18" stroke="#9a6a50" strokeWidth="1.500" />
    <path d="M14 17L22 9" stroke="#3fae1f" strokeWidth="2" />
  </Small>
);
const TlPlane = () => (
  <Small>
    <path d="M12 1L29 18L20 30L1 12Z" fill="#fbdcc4" stroke="#8a3a18" strokeWidth="2" />
    <path d="M7 12V21H14" fill="none" stroke="#333" strokeWidth="2" />
    <path d="M13 7H24V20" fill="none" stroke="#444" strokeWidth="2" />
    <path d="M9 13L14 8H23V19L18 23L12 19Z" fill="#eceef1" />
    <path d="M18 13L23 8V19L18 23Z" fill="#c9ced6" />
    <path d="M8 15L16 23" stroke="#1f6a30" strokeWidth="2" />
  </Small>
);

const features: { name: string; node: React.ReactNode }[] = [
  { name: "Sketch1", node: <TlSketch /> },
  { name: "Plane1", node: <TlOffset /> },
  { name: "Sketch2", node: <TlSketch /> },
  { name: "Plane2", node: <TlAngle /> },
  { name: "Sketch3", node: <TlSketch /> },
  { name: "Plane3", node: <TlPlane /> },
  { name: "Sketch4", node: <TlSketch /> },
  { name: "Plane4", node: <TlPlane /> },
  { name: "Sketch5", node: <TlSketch /> },
  { name: "Plane5", node: <TlPlane /> },
  { name: "Sketch6", node: <TlSketch /> },
];

const playback = [
  { name: "Go to start", d: "M4 2H7V30H4ZM8 16L29 2V30Z" },
  { name: "Step back", d: "M3 16L21 3V29ZM24 10H27V22H24Z" },
  { name: "Play", d: "M4 0L28 16L4 32Z" },
  { name: "Step forward", d: "M4 10H7V22H4ZM10 3L29 16L10 29Z" },
  { name: "Go to end", d: "M3 2L24 16L3 30ZM25 2H28V30H25Z" },
];

const Timeline = () => (
  <footer className="flex h-24 shrink-0 bg-[#cccccc]">
    <div className="flex items-center gap-[18px] pt-[3px] pb-[14px] pl-[11px]">
      {playback.map((p) => (
        <button key={p.name} aria-label={p.name}>
          <svg viewBox="0 0 32 32" className="size-8 text-[#4f4f4f]">
            <path d={p.d} fill="currentColor" />
          </svg>
        </button>
      ))}
    </div>
    <div className="relative ml-[38px] w-[518px] pt-3">
      <div className="h-2 bg-[#cdf07f]" />
      <div className="mt-2 flex justify-between px-1">
        {features.map((f) => (
          <button key={f.name} aria-label={f.name}>
            {f.node}
          </button>
        ))}
      </div>
      <div className="mt-2 mr-[17px] ml-5 flex h-3 justify-between border-b-4 border-[#666666]">
        {features.map((f) => (
          <span key={f.name} className="h-2 w-1 bg-[#666666]" />
        ))}
      </div>
      <svg viewBox="0 0 24 64" className="absolute top-4 -right-4 h-16 w-6 text-[#646464]" aria-label="Timeline marker">
        <path d="M0 0H24V7L14 17V64H10V17L0 7Z" fill="currentColor" />
      </svg>
    </div>
    <button aria-label="Timeline settings" className="mt-6 mr-1 ml-auto size-8">
      <Cog />
    </button>
  </footer>
);

export default function App() {
  return (
    <div className="flex min-h-screen flex-col bg-[#ededed] font-['Noto_Sans',sans-serif]">
      <Defs />
      <TitleBar />
      <QuickBar />
      <Tabs />
      <main className="relative flex flex-1 flex-col justify-between">
        <Model />
        <div className="relative flex items-start justify-between">
          <div>
            <Ribbon />
            <div className="mt-2">
              <PanelHeader title="BROWSER" />
              <Tree />
            </div>
          </div>
          <div className="pt-2">
            <ViewCube />
          </div>
        </div>
        <div className="relative grid grid-cols-[1fr_auto_1fr] items-end pb-2">
          <PanelHeader title="COMMENTS" collapsed />
          <NavBar />
        </div>
      </main>
      <Timeline />
    </div>
  );
}
